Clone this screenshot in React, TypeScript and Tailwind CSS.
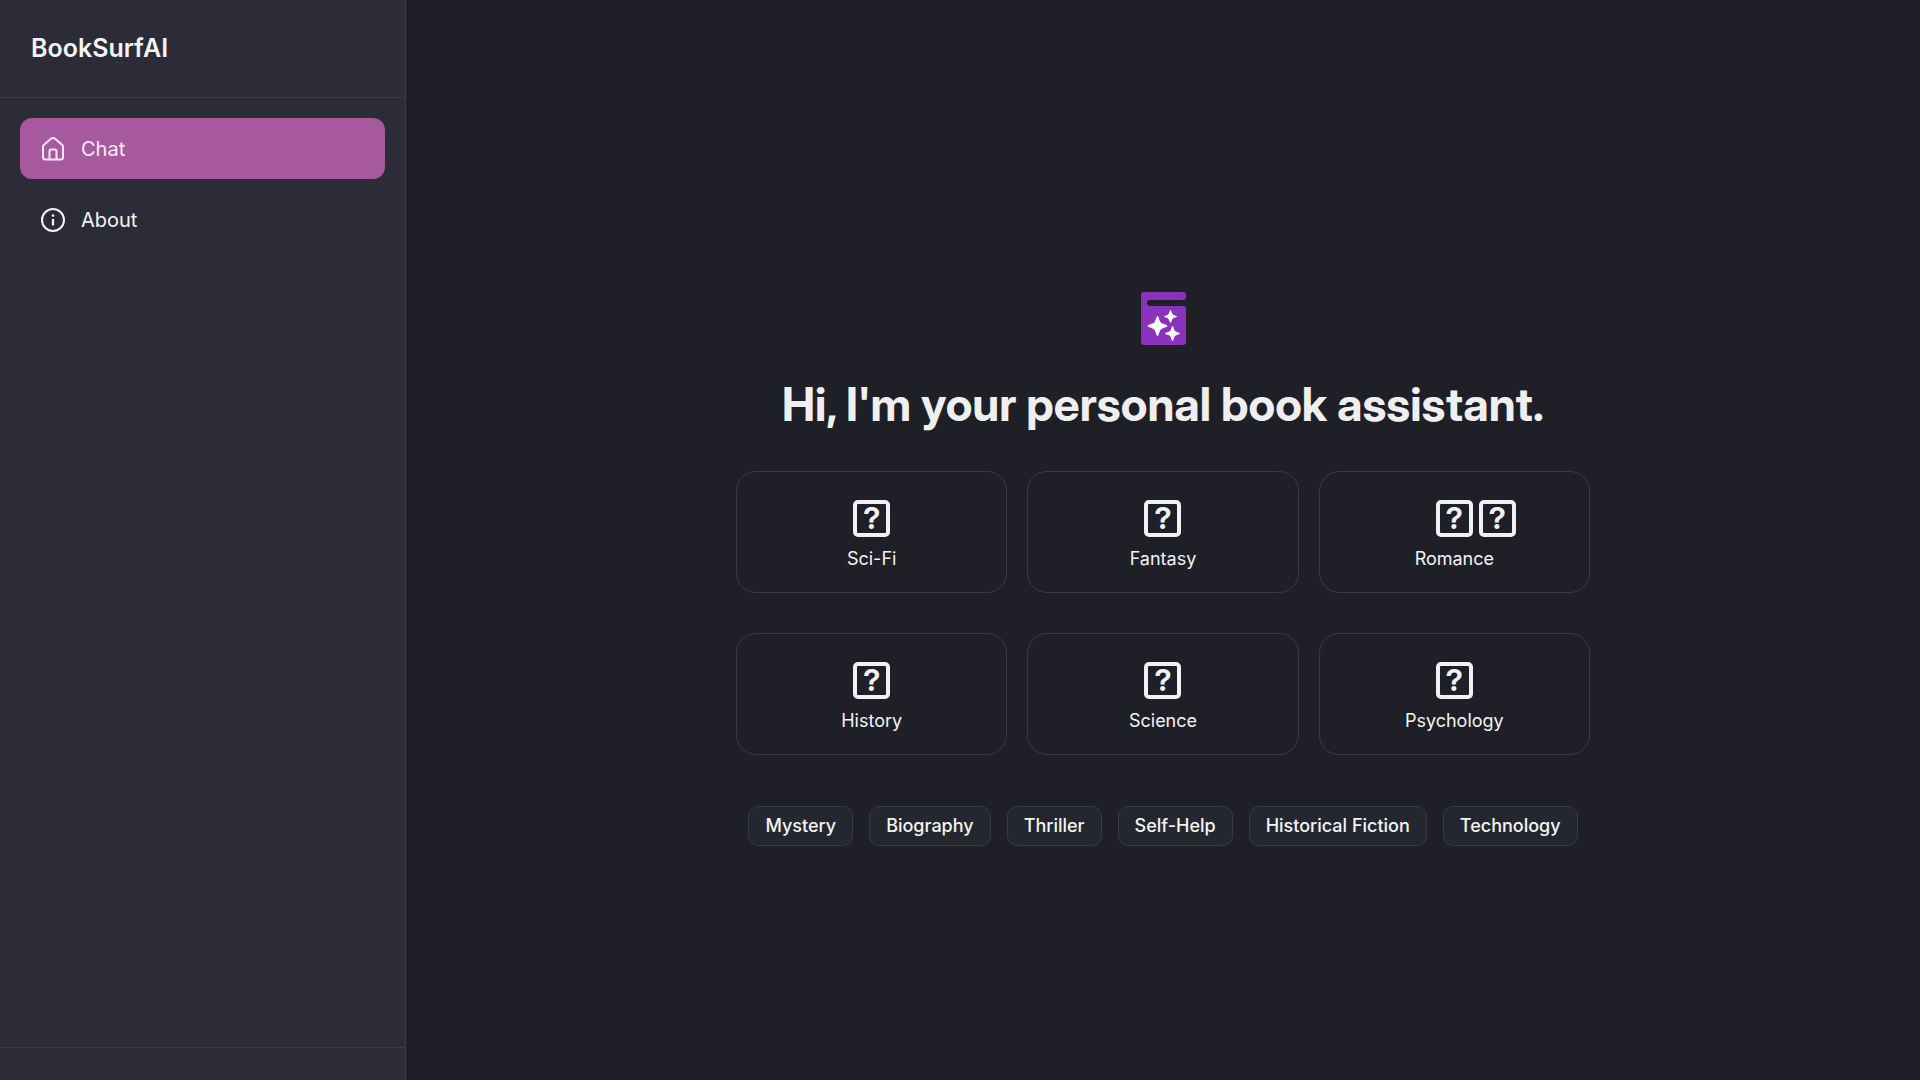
import { useState } from 'react';

const genres = [
  { name: 'Sci-Fi', glyphs: ['?'] },
  { name: 'Fantasy', glyphs: ['?'] },
  { name: 'Romance', glyphs: ['?', '?'] },
  { name: 'History', glyphs: ['?'] },
  { name: 'Science', glyphs: ['?'] },
  { name: 'Psychology', glyphs: ['?'] },
];

const tags = ['Mystery', 'Biography', 'Thriller', 'Self-Help', 'Historical Fiction', 'Technology'];

function HomeIcon() {
  return (
    <svg className="size-6" viewBox="0 0 24 24" fill="none" stroke="currentColor" strokeWidth="2" strokeLinejoin="round" aria-hidden="true">
      <path d="M2 9.800c0-.8.4-1.600 1-2.100l7.200-6.100a2.900 2.900 0 0 1 3.600 0l7.200 6.100c.6.5 1 1.300 1 2.100V20a2.500 2.500 0 0 1-2.500 2.500h-15A2.500 2.500 0 0 1 2 20z" />
      <path d="M8.500 22.500V14a1.500 1.500 0 0 1 1.500-1.500h4a1.500 1.500 0 0 1 1.500 1.500v8.500" />
    </svg>
  );
}

function InfoIcon() {
  return (
    <svg className="size-6" viewBox="0 0 24 24" fill="none" stroke="currentColor" strokeWidth="2" aria-hidden="true">
      <circle cx="12" cy="12" r="11" />
      <path d="M12 11v6.500" strokeWidth="2.200" />
      <circle cx="12" cy="7.600" r="1.300" fill="currentColor" stroke="none" />
    </svg>
  );
}

function BookLogo() {
  return (
    <svg className="h-[53px] w-[46px]" viewBox="0 0 46 53" aria-hidden="true">
      <path
        fill="#8b32bd"
        d="M4 0H43a3 3 0 0 1 3 3V5a3 3 0 0 1-3 3H10a3 3 0 0 0 0 6H43a3 3 0 0 1 3 3V50a3 3 0 0 1-3 3H4a3 3 0 0 1-3-3V3a3 3 0 0 1 3-3z"
      />
      <g fill="#fff">
        <path d="M17.500 24c1 0 1.500 3 2.400 5 .6 1.400 1.300 2 2.600 2.600 2 .9 5 1.400 5 2.400s-3 1.500-5 2.400c-1.300.6-2 1.200-2.600 2.600-.9 2-1.400 5-2.400 5s-1.500-3-2.400-5c-.6-1.400-1.300-2-2.600-2.600-2-.9-5-1.400-5-2.400s3-1.500 5-2.400c1.300-.6 2-1.200 2.600-2.600.9-2 1.400-5 2.400-5z" />
        <path d="M30.500 18c.7 0 1 2 1.600 3.200.4.900.8 1.300 1.700 1.700 1.200.6 3.200.9 3.200 1.600s-2 1-3.200 1.600c-.9.4-1.300.8-1.700 1.700-.6 1.200-.9 3.200-1.600 3.200s-1-2-1.600-3.200c-.4-.9-.8-1.300-1.700-1.700-1.200-.6-3.200-.9-3.200-1.600s2-1 3.200-1.600c.9-.4 1.300-.8 1.700-1.700.6-1.200.9-3.200 1.600-3.200z" />
        <path d="M32.500 34c.8 0 1.100 2.400 1.800 3.800.5 1 .9 1.400 1.900 1.900 1.400.7 3.800 1 3.800 1.800s-2.400 1.100-3.800 1.800c-1 .5-1.400.9-1.900 1.900-.7 1.400-1 3.800-1.800 3.800s-1.100-2.400-1.800-3.800c-.5-1-.9-1.400-1.900-1.900-1.400-.7-3.800-1-3.800-1.800s2.400-1.100 3.800-1.800c1-.5 1.400-.9 1.900-1.900.7-1.400 1-3.800 1.800-3.800z" />
      </g>
    </svg>
  );
}

const navItems = [
  { id: 'chat', label: 'Chat', icon: HomeIcon },
  { id: 'about', label: 'About', icon: InfoIcon },
];

export default function App() {
  const [activePage, setActivePage] = useState('chat');

  return (
    <div className="flex min-h-screen bg-[#1f1f28] font-[Inter,sans-serif] text-[#f4f4f5]">
      {/* Sidebar */}
      <aside className="flex w-[406px] shrink-0 flex-col border-r border-[#3a3b46] bg-[#2b2c37]">
        <div className="border-b border-[#3a3b46] px-[31px] pt-8 pb-[33px]">
          <span className="block text-[25px] leading-8 font-semibold">BookSurfAI</span>
        </div>

        <nav className="flex flex-1 flex-col gap-[10px] p-5">
          {navItems.map((item) => (
            <a
              key={item.id}
              href={`#${item.id}`}
              onClick={() => setActivePage(item.id)}
              className={`flex h-[61px] items-center gap-4 rounded-xl px-[21px] text-xl ${
                activePage === item.id ? 'bg-[#a6599f] text-[#ffe9fb]' : 'text-[#f4f4f5]'
              }`}
            >
              <item.icon />
              {item.label}
            </a>
          ))}
        </nav>

        <div className="h-[33px] border-t border-[#3a3b46]" />
      </aside>

      {/* Welcome */}
      <main className="flex flex-1 flex-col items-center justify-center px-8 pt-[58px]">
        <BookLogo />
        <h1 className="mt-[31px] text-center font-['Inter_Display',Inter,sans-serif] text-[46px] leading-[56px] font-bold text-[#efeff0]">
          Hi, I'm your personal book assistant.
        </h1>

        <div className="mt-[39px] grid w-full max-w-[854px] grid-cols-3 gap-x-5 gap-y-10">
          {genres.map((genre) => (
            <button
              key={genre.name}
              type="button"
              className="flex h-[122px] cursor-pointer flex-col items-center justify-center gap-2 rounded-[20px] border border-[#393a44] pt-2"
            >
              <span className="flex w-[37px] gap-[6px]" aria-hidden="true">
                {genre.glyphs.map((glyph, i) => (
                  <span
                    key={i}
                    className="flex size-[37px] shrink-0 items-center justify-center rounded-[5px] border-4 border-[#f1f1f3] font-['Inter_Display',Inter,sans-serif] text-[30px] leading-none font-bold text-[#f1f1f3]"
                  >
                    {glyph}
                  </span>
                ))}
              </span>
              <span className="text-lg leading-7">{genre.name}</span>
            </button>
          ))}
        </div>

        <div className="mt-[51px] flex flex-wrap justify-center gap-4">
          {tags.map((tag) => (
            <button
              key={tag}
              type="button"
              className="h-10 cursor-pointer rounded-[10px] border border-[#393a44] bg-[#24272f] px-4 text-lg font-medium"
            >
              {tag}
            </button>
          ))}
        </div>
      </main>
    </div>
  );
}
